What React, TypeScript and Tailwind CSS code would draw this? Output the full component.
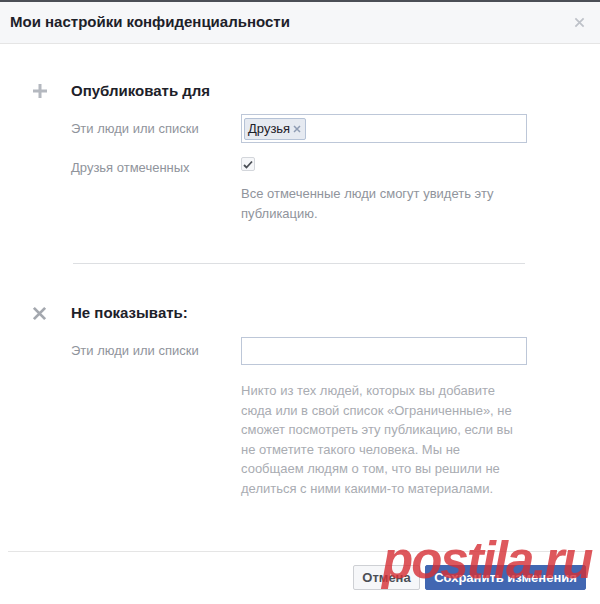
import { ReactElement } from "react";

const font = "font-['Liberation_Sans','Arial',sans-serif]";

function PlusIcon(): ReactElement {
  return (
    <svg width="16" height="16" viewBox="0 0 16 16" aria-hidden="true">
      <path d="M8 1v14M1 8h14" stroke="#b4b8bf" strokeWidth="3" />
    </svg>
  );
}

function CrossIcon({ size, color, width }: { size: number; color: string; width: number }): ReactElement {
  return (
    <svg width={size} height={size} viewBox="0 0 16 16" aria-hidden="true">
      <path d="M2 2l12 12M14 2L2 14" stroke={color} strokeWidth={width} />
    </svg>
  );
}

function FieldRow({ label, children }: { label: string; children: ReactElement }): ReactElement {
  return (
    <div className="flex items-center pl-[71px]">
      <div className="w-[170px] text-[13px] text-[#90949c]">{label}</div>
      {children}
    </div>
  );
}

function SectionHeading({ icon, title }: { icon: ReactElement; title: string }): ReactElement {
  return (
    <div className="flex h-[20px] items-center pl-[32px]">
      <div className="flex w-[39px] items-center">{icon}</div>
      <div className="text-[15px] font-bold text-[#1d2129]">{title}</div>
    </div>
  );
}

export default function App(): ReactElement {
  return (
    <div className={`relative flex h-[604px] w-[600px] flex-col overflow-hidden bg-white ${font}`}>
      <div className="h-[2px] bg-[#4b4f56]" />
      <div className="flex h-[42px] items-center justify-between border-b border-[#e5e5e5] bg-[#f6f7f9] pl-[10px] pr-[15px]">
        <div className="text-[15px] font-bold text-[#1d2129]">Мои настройки конфиденциальности</div>
        <CrossIcon size={11} color="#bec2c9" width={2.5} />
      </div>

      <div className="mt-[37px]">
        <SectionHeading icon={<PlusIcon />} title="Опубликовать для" />
      </div>
      <div className="mt-[13px]">
        <FieldRow label="Эти люди или списки">
          <div className="flex h-[29px] w-[286px] items-center border border-[#bdc7d8] px-[2px]">
            <div className="flex h-[22px] items-center gap-[3px] rounded-[2px] border border-[#b5c2d6] bg-[#e6eaf1] pl-[3px] pr-[4px]">
              <span className="text-[13px] text-[#1d2129]">Друзья</span>
              <CrossIcon size={8} color="#8f9cb3" width={3} />
            </div>
          </div>
        </FieldRow>
      </div>
      <div className="mt-[14px] flex h-[16px] items-start pl-[71px]">
        <div className="mt-[3px] w-[170px] text-[13px] leading-[16px] text-[#90949c]">Друзья отмеченных</div>
        <div className="flex h-[14px] w-[14px] items-center justify-center rounded-[2px] border border-[#d3d6db] bg-[#f6f7f9]">
          <svg width="10" height="9" viewBox="0 0 10 9" aria-hidden="true">
            <path d="M1 5l2.5 2.5L9 1.5" fill="none" stroke="#4b4f56" strokeWidth="1.8" />
          </svg>
        </div>
      </div>
      <div className="mt-[11px] pl-[241px] text-[13px] leading-[19.5px] text-[#90949c]">
        Все отмеченные люди смогут увидеть эту
        <br />
        публикацию.
      </div>

      <div className="ml-[73px] mt-[40px] h-px w-[452px] bg-[#dddfe2]" />

      <div className="mt-[39px]">
        <SectionHeading icon={<CrossIcon size={15} color="#a4a8af" width={3} />} title="Не показывать:" />
      </div>
      <div className="mt-[14px]">
        <FieldRow label="Эти люди или списки">
          <div className="h-[28px] w-[286px] border border-[#bdc7d8]" />
        </FieldRow>
      </div>
      <div className="mt-[16px] whitespace-nowrap pl-[241px] text-[13px] leading-[19.6px] text-[#a9acb2]">
        Никто из тех людей, которых вы добавите
        <br />
        сюда или в свой список «Ограниченные», не
        <br />
        сможет посмотреть эту публикацию, если вы
        <br />
        не отметите такого человека. Мы не
        <br />
        сообщаем людям о том, что вы решили не
        <br />
        делиться с ними какими-то материалами.
      </div>

      <div className="mx-[8px] mt-auto flex justify-end gap-[5px] border-t border-[#e5e5e5] pb-[14px] pr-[6px] pt-[13px]">
        <button className="h-[25px] w-[67px] rounded-[2px] border border-[#ced0d4] bg-[#f6f7f9] text-[13px] font-bold text-[#4b4f56]">
          Отмена
        </button>
        <button className="h-[25px] w-[161px] rounded-[2px] border border-[#4267b2] bg-[#4267b2] text-[13px] font-bold text-white">
          Сохранить изменения
        </button>
      </div>

      <div className="pointer-events-none absolute left-[382px] top-[535px] text-[51px] font-bold italic leading-none tracking-[-2px] text-[#d62f35] opacity-80">
        postila.ru
      </div>
    </div>
  );
}
